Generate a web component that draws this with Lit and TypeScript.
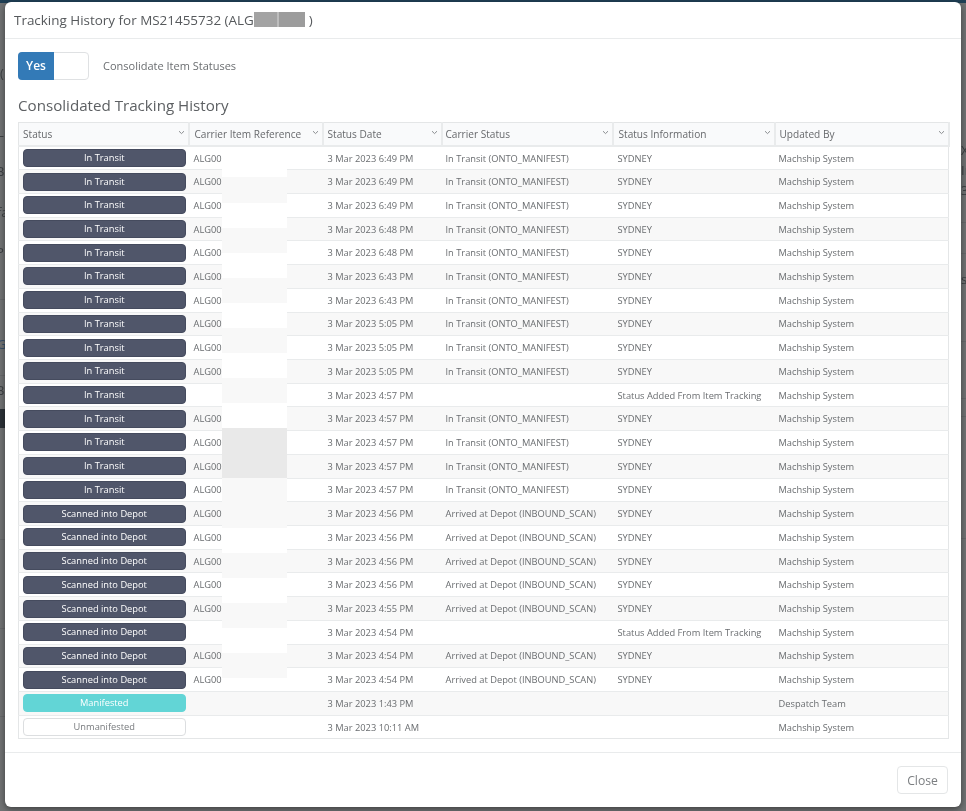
import { LitElement, html, css, svg } from "lit";
import { customElement } from "lit/decorators.js";

type Row = { s: string; k: string; ref: boolean; date: string; cs: string; info: string; by: string };

const T = "In Transit (ONTO_MANIFEST)";
const D = "Arrived at Depot (INBOUND_SCAN)";
const M = "Machship System";
const mk = (s: string, k: string, ref: boolean, date: string, cs: string, info: string, by = M): Row => ({ s, k, ref, date, cs, info, by });
const it = (date: string) => mk("In Transit", "dark", true, date, T, "SYDNEY");
const sc = (date: string) => mk("Scanned into Depot", "dark", true, date, D, "SYDNEY");
const rows: Row[] = [
  it("3 Mar 2023 6:49 PM"), it("3 Mar 2023 6:49 PM"), it("3 Mar 2023 6:49 PM"), it("3 Mar 2023 6:48 PM"), it("3 Mar 2023 6:48 PM"),
  it("3 Mar 2023 6:43 PM"), it("3 Mar 2023 6:43 PM"), it("3 Mar 2023 5:05 PM"), it("3 Mar 2023 5:05 PM"), it("3 Mar 2023 5:05 PM"),
  mk("In Transit", "dark", false, "3 Mar 2023 4:57 PM", "", "Status Added From Item Tracking"),
  it("3 Mar 2023 4:57 PM"), it("3 Mar 2023 4:57 PM"), it("3 Mar 2023 4:57 PM"), it("3 Mar 2023 4:57 PM"),
  sc("3 Mar 2023 4:56 PM"), sc("3 Mar 2023 4:56 PM"), sc("3 Mar 2023 4:56 PM"), sc("3 Mar 2023 4:56 PM"), sc("3 Mar 2023 4:55 PM"),
  mk("Scanned into Depot", "dark", false, "3 Mar 2023 4:54 PM", "", "Status Added From Item Tracking"),
  sc("3 Mar 2023 4:54 PM"), sc("3 Mar 2023 4:54 PM"),
  mk("Manifested", "teal", false, "3 Mar 2023 1:43 PM", "", "", "Despatch Team"),
  mk("Unmanifested", "plain", false, "3 Mar 2023 10:11 AM", "", ""),
];

const heads: [string, number][] = [
  ["Status", 170], ["Carrier Item Reference", 134], ["Status Date", 119], ["Carrier Status", 171], ["Status Information", 162], ["Updated By", 174],
];

// Redaction patches over the carrier reference column: [top, bottom, colour], page y
const W = "#ffffff", F = "#f8f8f8", G = "#e9e9e9";
const patches: [number, number, string][] = [
  [147, 177, W], [177, 203, F], [203, 228, W], [228, 253, F], [253, 278, W], [278, 303, F], [303, 328, W], [328, 353, F],
  [353, 378, W], [378, 403, F], [403, 428, W], [428, 478, G], [478, 528, F], [528, 553, W], [553, 578, F], [578, 603, W],
  [603, 628, F], [628, 653, W], [653, 678, F],
];

// Slivers of the page behind the dimmed backdrop
const behind: [string, number, number][] = [
  ["(", 0, 66], ["L", -3, 125], ["B", -4, 164], ["fa", -3, 205], ["P", -4, 245], ["G", -3, 337], ["B", -4, 383],
  ["X", 961, 143], ["In", 961, 163], ["3", 961, 183], ["s", 961, 272],
];
const lines: [number, number, number][] = [
  [0, 5, 299], [0, 5, 375], [0, 5, 539], [0, 5, 628], [0, 5, 716],
  [961, 5, 222], [961, 5, 253], [961, 5, 341], [961, 5, 398], [961, 5, 416], [961, 5, 538],
];

const chevron = svg`<path d="M1 1.2 3.5 3.6 6 1.2" fill="none" stroke="#8a8d90" stroke-width="1"/>`;

@customElement("app-root")
export class AppRoot extends LitElement {
  static styles = css`
    :host {
      display: block;
      position: relative;
      width: 966px;
      height: 811px;
      overflow: hidden;
      background: #707273;
      font-family: "Open Sans", "Noto Sans", sans-serif;
      color: #676a6c;
      filter: blur(0.3px);
    }
    .topbar { height: 3px; background: #1f3f55; }
    .sliver { position: absolute; font-size: 13px; line-height: 14px; color: #3d4043; }
    .sliver.link { color: #38506a; }
    .hline { position: absolute; height: 1px; background: #66686a; }
    .darkbar { position: absolute; left: 0; top: 409px; width: 5px; height: 19px; background: #2b3036; }
    .modal {
      position: absolute;
      left: 5px;
      top: 2px;
      width: 956px;
      height: 805px;
      box-sizing: border-box;
      background: #fff;
      border-radius: 6px;
      box-shadow: 0 2px 6px rgba(0, 0, 0, 0.45);
      display: flex;
      flex-direction: column;
    }
    .header {
      height: 37px;
      box-sizing: border-box;
      border-bottom: 1px solid #e9ebec;
      padding: 8px 9px 0;
      font-size: 13.45px;
      line-height: 20px;
      color: #56595c;
      display: flex;
    }
    .mask { display: inline-flex; height: 15px; margin: 2px 4px 0 0; }
    .mask i { display: block; height: 15px; }
    .mask i:nth-child(1) { width: 23px; background: #a3a3a3; }
    .mask i:nth-child(2) { width: 2px; background: #bdbdbd; }
    .mask i:nth-child(3) { width: 26px; background: #9c9c9c; }
    .body { flex: 1; padding: 13px 13px 0 13px; position: relative; }
    .opt { display: flex; align-items: center; gap: 14px; height: 28px; }
    .switch {
      width: 71px;
      height: 28px;
      box-sizing: border-box;
      border: 1px solid #dfe1e3;
      border-radius: 4px;
      display: flex;
    }
    .switch span {
      width: 36px;
      margin: -1px 0 -1px -1px;
      background: #337ab7;
      border-radius: 4px 0 0 4px;
      color: #fff;
      font-size: 12px;
      font-weight: 600;
      line-height: 28px;
      text-align: center;
    }
    .optlabel { font-size: 11px; color: #6b6e71; margin-top: -2px; }
    h2 {
      margin: 15px 0 0;
      height: 27px;
      font-size: 15.15px;
      line-height: 20px;
      font-weight: 400;
      color: #5d6063;
    }
    .grid {
      width: 930px;
      box-sizing: border-box;
      border: 1px solid #e4e6e7;
      border-collapse: collapse;
      table-layout: fixed;
      font-size: 9.3px;
    }
    th {
      height: 23.5px;
      padding: 0 4px 0 5px;
      box-sizing: border-box;
      background: #f9fafb;
      border-right: 2px solid #e9ebec;
      border-bottom: 2px solid #e9ebec;
      font-size: 10.1px;
      font-weight: 400;
      text-align: left;
      color: #67696c;
      position: relative;
    }
    th:first-child, th:nth-child(3), th:nth-child(6) { padding-left: 4px; }
    th:nth-child(4) { padding-left: 3px; }
    th svg { position: absolute; right: 3px; top: 7px; }
    td {
      height: 23.72px;
      padding: 0 4px 0 5px;
      box-sizing: border-box;
      border-top: 1px solid #e9ebec;
      color: #6a6d70;
      white-space: nowrap;
      overflow: hidden;
      vertical-align: middle;
    }
    tr:nth-child(even) td { background: #f8f8f8; }
    td:first-child { padding: 0 3px 0 4px; }
    td:nth-child(4), td:nth-child(6) { padding-left: 4px; }
    .pill {
      height: 18px;
      box-sizing: border-box;
      border-radius: 4px;
      font-size: 9.3px;
      line-height: 16px;
      text-align: center;
      border: 1px solid transparent;
    }
    .dark { background: #50566a; border-color: #454b5e; color: #fff; }
    .teal { background: #62d5d6; border-color: #62d5d6; color: #fff; }
    .plain { background: #fff; border-color: #dcdee0; color: #777a7d; }
    .patch { position: absolute; left: 217px; width: 65px; }
    .footer {
      height: 55px;
      box-sizing: border-box;
      border-top: 1px solid #e9ebec;
      padding: 13px 13px 0;
      display: flex;
      justify-content: flex-end;
    }
    .close {
      width: 51px;
      height: 28px;
      box-sizing: border-box;
      border: 1px solid #e4e6e7;
      border-radius: 4px;
      background: #fff;
      color: #7b7e81;
      font: 400 12.2px "Open Sans", sans-serif;
      padding: 0;
    }
  `;

  render() {
    return html`
      <div class="topbar"></div>
      ${behind.map(([t, x, y]) => html`<span class="sliver ${t === "G" ? "link" : ""}" style="left:${x}px;top:${y}px">${t}</span>`)}
      ${lines.map(([x, w, y]) => html`<div class="hline" style="left:${x}px;top:${y}px;width:${w}px"></div>`)}
      <div class="darkbar"></div>
      <div class="modal">
        <div class="header">Tracking History for MS21455732 (ALG<span class="mask"><i></i><i></i><i></i></span>)</div>
        <div class="body">
          <div class="opt">
            <div class="switch"><span>Yes</span></div>
            <div class="optlabel">Consolidate Item Statuses</div>
          </div>
          <h2>Consolidated Tracking History</h2>
          <table class="grid">
            <colgroup>${heads.map(([, w]) => html`<col style="width:${w}px" />`)}</colgroup>
            <thead>
              <tr>${heads.map(([h]) => html`<th>${h}<svg width="7" height="5" viewBox="0 0 7 5">${chevron}</svg></th>`)}</tr>
            </thead>
            <tbody>
              ${rows.map(
                (r) => html`<tr>
                  <td><div class="pill ${r.k}">${r.s}</div></td>
                  <td>${r.ref ? "ALG00" : ""}</td>
                  <td>${r.date}</td>
                  <td>${r.cs}</td>
                  <td>${r.info}</td>
                  <td>${r.by}</td>
                </tr>`
              )}
            </tbody>
          </table>
          ${patches.map(
            ([a, b, c]) => html`<div class="patch" style="top:${a - 39}px;height:${b - a}px;background:${c}"></div>`
          )}
        </div>
        <div class="footer"><button class="close">Close</button></div>
      </div>
    `;
  }
}
